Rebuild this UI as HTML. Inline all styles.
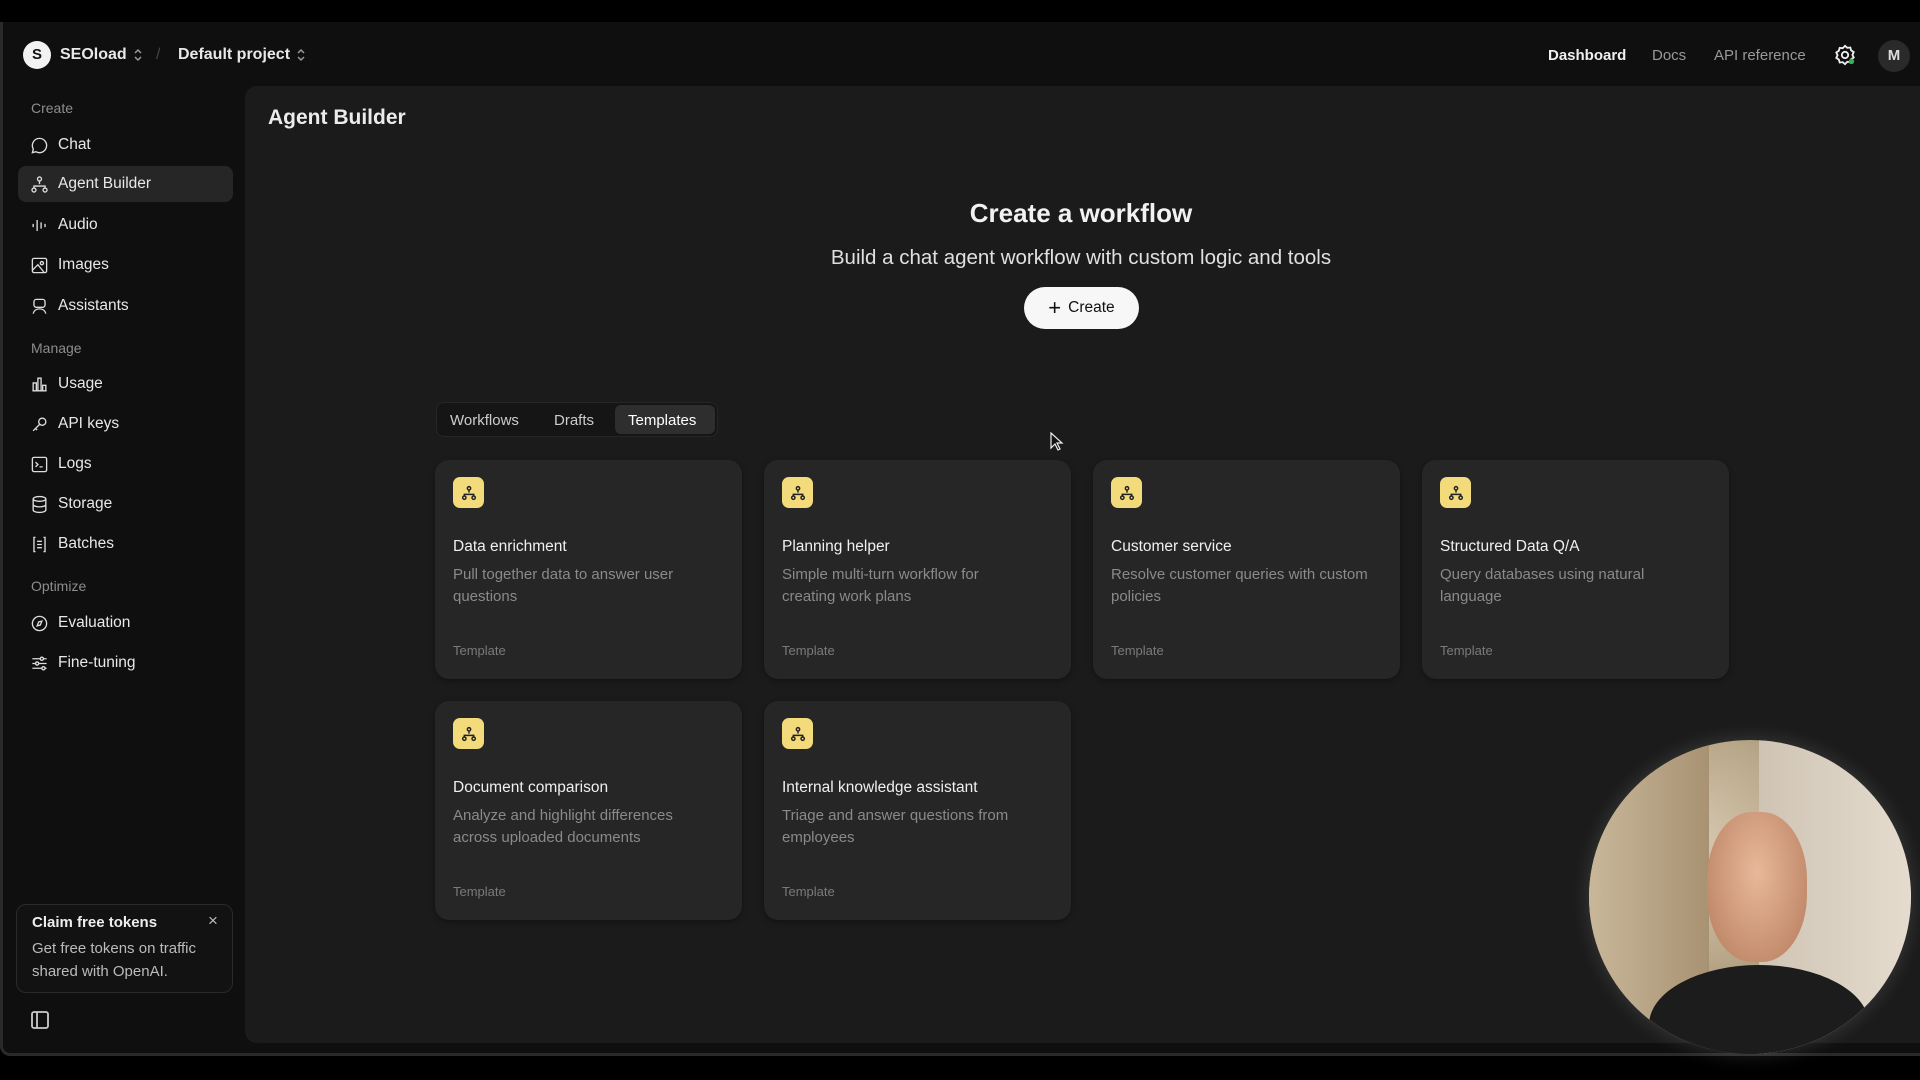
<!DOCTYPE html>
<html><head><meta charset="utf-8"><style>
*{box-sizing:border-box;margin:0;padding:0}
body{width:1920px;height:1080px;background:#000;font-family:"Liberation Sans",sans-serif;color:#ececec;position:relative;overflow:hidden}
.win{position:absolute;left:0;top:22px;width:1920px;height:1034px;background:#0f0f0f;border-left:3px solid #2a2a2a;border-bottom:3px solid #2a2a2a;border-radius:0 0 0 10px}
.main{position:absolute;left:245px;top:86px;width:1700px;height:957px;background:#1b1b1b;border-radius:12px 0 0 12px}
.abs{position:absolute;white-space:nowrap}
.lbl{position:absolute;left:28px;font-size:14px;color:#8d8d8d}
.item{position:absolute;left:15px;width:215px;height:36px;border-radius:8px;font-size:15.5px;color:#e8e8e8;display:flex;align-items:center;padding-left:12px}
.item svg{width:19px;height:19px;margin-right:9px;stroke:#ddd;fill:none;stroke-width:1.7}
.card{position:absolute;width:307px;height:219px;background:#262626;border-radius:14px;box-shadow:0 2px 6px rgba(0,0,0,.35)}
.card .ic{position:absolute;left:18px;top:17px;width:31px;height:31px;background:#f3da7a;border-radius:7px;display:flex;align-items:center;justify-content:center}
.card .t{position:absolute;left:18px;top:78px;font-size:15.5px;color:#f0f0f0}
.card .d{position:absolute;left:18px;top:104px;width:245px;font-size:15px;line-height:22px;color:#8a8a8a;white-space:normal}
.card .tp{position:absolute;left:18px;top:183px;font-size:13px;color:#7a7a7a}
.chev{display:inline-block;vertical-align:middle;margin-left:6px}
</style></head><body>
<div class="win">
  <div class="abs" style="left:20px;top:19px;width:28px;height:28px;border-radius:50%;background:#f2f2f2;color:#111;font-size:15px;font-weight:bold;text-align:center;line-height:28px">S</div>
  <div class="abs" style="left:57px;top:24px;font-size:16px;font-weight:bold;color:#e8e8e8">SEOload<svg class="chev" width="10" height="14" viewBox="0 0 10 14" fill="none" stroke="#999" stroke-width="1.5"><path d="M2 5l3-3 3 3M2 9l3 3 3-3"/></svg></div>
  <div class="abs" style="left:153px;top:24px;font-size:16px;color:#444">/</div>
  <div class="abs" style="left:175px;top:24px;font-size:16px;font-weight:bold;color:#e8e8e8">Default project<svg class="chev" width="10" height="14" viewBox="0 0 10 14" fill="none" stroke="#999" stroke-width="1.5"><path d="M2 5l3-3 3 3M2 9l3 3 3-3"/></svg></div>
  <div class="abs" style="left:1545px;top:25px;font-size:15px;font-weight:bold;color:#f0f0f0">Dashboard</div>
  <div class="abs" style="left:1649px;top:25px;font-size:15px;color:#999">Docs</div>
  <div class="abs" style="left:1711px;top:25px;font-size:15px;color:#999">API reference</div>
  <svg class="abs" style="left:1831px;top:22px" width="22" height="22" viewBox="0 0 24 24" fill="none" stroke="#eee" stroke-width="2"><path d="M12 2l2.5 2.2 3.3-.4.9 3.2 2.8 1.8-1.4 3 1.4 3-2.8 1.8-.9 3.2-3.3-.4L12 22l-2.5-2.2-3.3.4-.9-3.2L2.5 15.2l1.4-3-1.4-3 2.8-1.8.9-3.2 3.3.4z"/><circle cx="12" cy="12" r="3.5"/><circle cx="19" cy="19" r="3" fill="#2fb552" stroke="none"/></svg>
  <div class="abs" style="left:1875px;top:18px;width:32px;height:32px;border-radius:50%;background:#2a2a2a;color:#ddd;font-size:15px;font-weight:bold;text-align:center;line-height:32px">M</div>

  <div class="lbl" style="top:78px">Create</div>
  <div class="item" style="top:105px"><svg viewBox="0 0 24 24"><path d="M12 3a9 9 0 1 1-4.5 16.8L3 21l1.2-4.5A9 9 0 0 1 12 3z"/></svg>Chat</div>
  <div class="item" style="top:144px;background:#262626"><svg viewBox="0 0 24 24"><circle cx="12" cy="5" r="2.5"/><circle cx="5" cy="19" r="2.5"/><circle cx="19" cy="19" r="2.5"/><path d="M12 7.5v4M5 16.5v-2.5h14v2.5"/></svg>Agent Builder</div>
  <div class="item" style="top:185px"><svg viewBox="0 0 24 24"><path d="M4 10v4M9 5v14M14 8v8M19 10v4"/></svg>Audio</div>
  <div class="item" style="top:225px"><svg viewBox="0 0 24 24"><rect x="3" y="3" width="18" height="18" rx="2"/><circle cx="15" cy="9" r="2"/><path d="M3 18l7-7 8 10"/></svg>Images</div>
  <div class="item" style="top:266px"><svg viewBox="0 0 24 24"><rect x="5" y="3" width="14" height="10" rx="3"/><path d="M9 8h.01M15 8h.01M4 21c1-4 4-6 8-6s7 2 8 6"/></svg>Assistants</div>
  <div class="lbl" style="top:318px">Manage</div>
  <div class="item" style="top:344px"><svg viewBox="0 0 24 24"><path d="M4 20V10h4v10M10 20V4h4v16M16 20v-7h4v7M3 20h18"/></svg>Usage</div>
  <div class="item" style="top:384px"><svg viewBox="0 0 24 24"><circle cx="15.5" cy="8.5" r="4.5"/><path d="M12 12l-8 8M7 17l2 2"/></svg>API keys</div>
  <div class="item" style="top:424px"><svg viewBox="0 0 24 24"><rect x="3" y="3" width="18" height="18" rx="2"/><path d="M7 9l3 3-3 3M12 15h4"/></svg>Logs</div>
  <div class="item" style="top:464px"><svg viewBox="0 0 24 24"><ellipse cx="12" cy="5" rx="8" ry="3"/><path d="M4 5v14c0 1.7 3.6 3 8 3s8-1.3 8-3V5M4 12c0 1.7 3.6 3 8 3s8-1.3 8-3"/></svg>Storage</div>
  <div class="item" style="top:504px"><svg viewBox="0 0 24 24"><path d="M7 3H5v18h2M17 3h2v18h-2M9 8h6M9 12h6M9 16h6"/></svg>Batches</div>
  <div class="lbl" style="top:556px">Optimize</div>
  <div class="item" style="top:583px"><svg viewBox="0 0 24 24"><circle cx="12" cy="12" r="9"/><path d="M15 9l-2 5-4 1 2-5z"/></svg>Evaluation</div>
  <div class="item" style="top:623px"><svg viewBox="0 0 24 24"><path d="M3 6h10M17 6h4M3 12h4M11 12h10M3 18h12M19 18h2"/><circle cx="15" cy="6" r="2"/><circle cx="9" cy="12" r="2"/><circle cx="17" cy="18" r="2"/></svg>Fine-tuning</div>

  <div class="abs" style="left:13px;top:882px;width:217px;height:89px;border:1px solid #2a2a2a;border-radius:10px;background:#121212"></div>
  <div class="abs" style="left:29px;top:892px;font-size:15px;font-weight:bold;color:#eee">Claim free tokens</div>
  <div class="abs" style="left:205px;top:889px;font-size:17px;color:#bbb">×</div>
  <div class="abs" style="left:29px;top:915px;font-size:15px;line-height:23px;color:#bbb">Get free tokens on traffic<br>shared with OpenAI.</div>
  <svg class="abs" style="left:28px;top:989px" width="18" height="18" viewBox="0 0 18 18" fill="none" stroke="#ccc" stroke-width="1.8"><rect x="1" y="1" width="16" height="16" rx="2"/><path d="M6 1v16"/></svg>
</div>

<div class="main">
  <div class="abs" style="left:23px;top:20px;font-size:21px;font-weight:bold;color:#ececec">Agent Builder</div>
  <div class="abs" style="left:0;width:1672px;top:112px;text-align:center;font-size:26px;font-weight:bold;color:#f2f2f2">Create a workflow</div>
  <div class="abs" style="left:0;width:1672px;top:160px;text-align:center;font-size:20.5px;color:#e0e0e0">Build a chat agent workflow with custom logic and tools</div>
  <div class="abs" style="left:779px;top:201px;width:115px;height:42px;border-radius:21px;background:#f7f7f7;color:#111;font-size:15.5px;display:flex;align-items:center;justify-content:center"><span style="font-size:22px;margin-right:7px;line-height:1">+</span>Create</div>

  <div class="abs" style="left:191px;top:316px;width:282px;height:35px;border-radius:8px;background:#151515;border:1px solid #262626"></div>
  <div class="abs" style="left:370px;top:319px;width:100px;height:29px;border-radius:6px;background:#2e2e2e"></div>
  <div class="abs" style="left:205px;top:326px;font-size:15px;color:#ccc">Workflows</div>
  <div class="abs" style="left:309px;top:326px;font-size:15px;color:#ccc">Drafts</div>
  <div class="abs" style="left:383px;top:326px;font-size:15px;color:#fff">Templates</div>

  <div class="card" style="left:190px;top:374px"><div class="ic"><svg width="16" height="16" viewBox="0 0 24 24" fill="none" stroke="#222" stroke-width="2.2"><circle cx="12" cy="5" r="2.5"/><circle cx="5" cy="19" r="2.5"/><circle cx="19" cy="19" r="2.5"/><path d="M12 7.5v4M5 16.5v-2.5h14v2.5"/></svg></div><div class="t">Data enrichment</div><div class="d">Pull together data to answer user questions</div><div class="tp">Template</div></div>
  <div class="card" style="left:519px;top:374px"><div class="ic"><svg width="16" height="16" viewBox="0 0 24 24" fill="none" stroke="#222" stroke-width="2.2"><circle cx="12" cy="5" r="2.5"/><circle cx="5" cy="19" r="2.5"/><circle cx="19" cy="19" r="2.5"/><path d="M12 7.5v4M5 16.5v-2.5h14v2.5"/></svg></div><div class="t">Planning helper</div><div class="d">Simple multi-turn workflow for creating work plans</div><div class="tp">Template</div></div>
  <div class="card" style="left:848px;top:374px"><div class="ic"><svg width="16" height="16" viewBox="0 0 24 24" fill="none" stroke="#222" stroke-width="2.2"><circle cx="12" cy="5" r="2.5"/><circle cx="5" cy="19" r="2.5"/><circle cx="19" cy="19" r="2.5"/><path d="M12 7.5v4M5 16.5v-2.5h14v2.5"/></svg></div><div class="t">Customer service</div><div class="d" style="width:275px">Resolve customer queries with custom policies</div><div class="tp">Template</div></div>
  <div class="card" style="left:1177px;top:374px"><div class="ic"><svg width="16" height="16" viewBox="0 0 24 24" fill="none" stroke="#222" stroke-width="2.2"><circle cx="12" cy="5" r="2.5"/><circle cx="5" cy="19" r="2.5"/><circle cx="19" cy="19" r="2.5"/><path d="M12 7.5v4M5 16.5v-2.5h14v2.5"/></svg></div><div class="t">Structured Data Q/A</div><div class="d">Query databases using natural language</div><div class="tp">Template</div></div>
  <div class="card" style="left:190px;top:615px"><div class="ic"><svg width="16" height="16" viewBox="0 0 24 24" fill="none" stroke="#222" stroke-width="2.2"><circle cx="12" cy="5" r="2.5"/><circle cx="5" cy="19" r="2.5"/><circle cx="19" cy="19" r="2.5"/><path d="M12 7.5v4M5 16.5v-2.5h14v2.5"/></svg></div><div class="t">Document comparison</div><div class="d" style="width:260px">Analyze and highlight differences across uploaded documents</div><div class="tp">Template</div></div>
  <div class="card" style="left:519px;top:615px"><div class="ic"><svg width="16" height="16" viewBox="0 0 24 24" fill="none" stroke="#222" stroke-width="2.2"><circle cx="12" cy="5" r="2.5"/><circle cx="5" cy="19" r="2.5"/><circle cx="19" cy="19" r="2.5"/><path d="M12 7.5v4M5 16.5v-2.5h14v2.5"/></svg></div><div class="t">Internal knowledge assistant</div><div class="d">Triage and answer questions from employees</div><div class="tp">Template</div></div>
</div>

<svg class="abs" style="left:1050px;top:432px" width="14" height="20" viewBox="0 0 14 20"><path d="M1 1v15l4-4 3 6 2-1-3-6h5z" fill="#111" stroke="#eee" stroke-width="1.2"/></svg>

<div class="abs" style="left:1589px;top:740px;width:322px;height:314px;border-radius:50%;overflow:hidden;background:radial-gradient(ellipse at 30% 35%,#d9cbb4 0%,#b8a688 40%,#8c7a62 70%,#5a4c3d 100%);box-shadow:0 0 20px rgba(255,255,255,.15)">
  <div style="position:absolute;left:0;top:0;width:120px;height:314px;background:linear-gradient(90deg,#c9b79a,#a89272)"></div>
  <div style="position:absolute;left:170px;top:0;width:160px;height:314px;background:linear-gradient(90deg,#cfc4b4,#e6ddd0)"></div>
  <div style="position:absolute;left:118px;top:72px;width:100px;height:150px;border-radius:45%;background:radial-gradient(ellipse at 50% 40%,#e8b89a,#b57c5c)"></div>
  <div style="position:absolute;left:60px;top:225px;width:220px;height:120px;border-radius:50% 50% 0 0;background:#1c1c1c"></div>
</div>
</body></html>
